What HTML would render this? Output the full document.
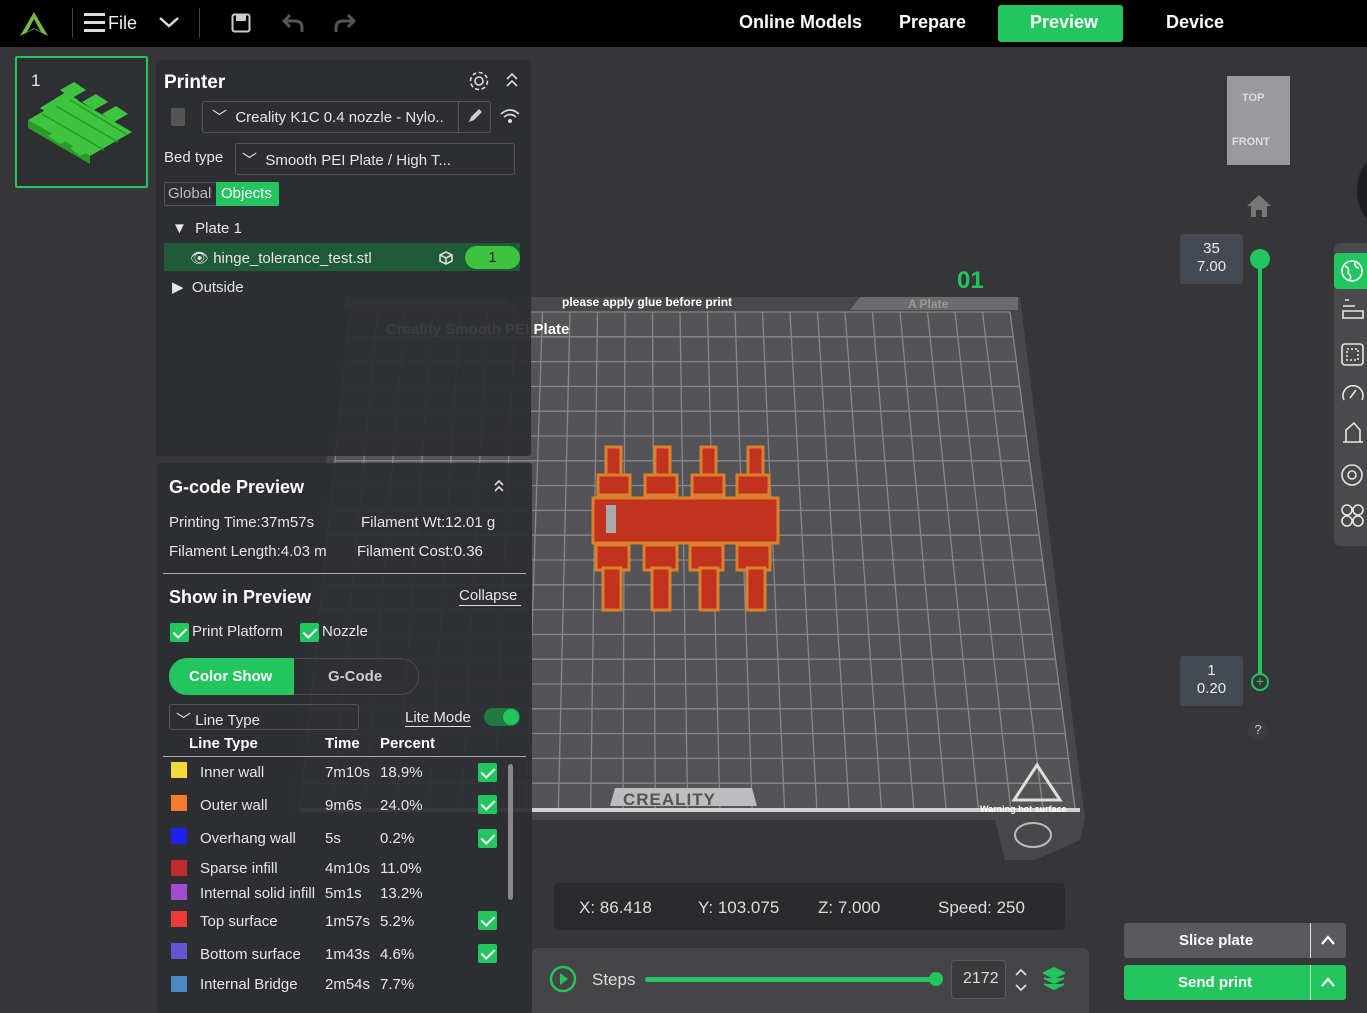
<!DOCTYPE html>
<html><head><meta charset="utf-8">
<style>
*{box-sizing:border-box;margin:0;padding:0}
body{width:1367px;height:1013px;overflow:hidden;background:#363639;font-family:"Liberation Sans",sans-serif;color:#e8e8e8;position:relative;font-size:15px}
.a{position:absolute}
.top{left:0;top:0;width:1367px;height:47px;background:#000}
.nav{top:12px;font-weight:bold;font-size:18px;color:#fff}
.panel{background:rgba(44,45,48,0.93)}
.cb{width:19px;height:19px;background:#22c55e;border-radius:2px;display:block}
.cb:after{content:"";position:absolute;left:6px;top:2px;width:6px;height:11px;border:solid #fff;border-width:0 2.5px 2.5px 0;transform:rotate(45deg)}
.sw{width:16px;height:16px}
.t{font-size:15px;color:#e6e6e6}
.ic{stroke:#ddd;fill:none;stroke-width:1.6}
</style></head><body>
<div class="a top"></div>
<svg class="a" style="left:18px;top:10px" width="32" height="28" viewBox="0 0 32 28"><path d="M16 2 L30 26 L16 19 L2 26 Z" fill="#7ab648"/><path d="M16 9 L23 22 L16 18 L9 22 Z" fill="#000"/></svg>
<div class="a" style="left:72px;top:8px;width:1px;height:30px;background:#444"></div>
<div class="a" style="left:84px;top:13px;width:21px;height:3px;background:#ddd;box-shadow:0 8px 0 #ddd,0 16px 0 #ddd"></div>
<div class="a" style="left:108px;top:13px;font-size:18px;color:#eee">File</div>
<svg class="a" style="left:158px;top:15px" width="22" height="14"><path d="M2 3 L11 11 L20 3" stroke="#ddd" stroke-width="2.5" fill="none"/></svg>
<div class="a" style="left:199px;top:8px;width:1px;height:30px;background:#444"></div>
<svg class="a" style="left:231px;top:13px" width="20" height="20"><rect x="1.5" y="1.5" width="17" height="17" rx="2" fill="none" stroke="#ccc" stroke-width="2"/><rect x="5" y="2" width="10" height="6" fill="#ccc"/></svg>
<svg class="a" style="left:281px;top:12px" width="24" height="22"><path d="M9 3 L3 9 L9 15 M3 9 H14 Q21 9 21 16 V20" stroke="#555" stroke-width="3" fill="none"/></svg>
<svg class="a" style="left:333px;top:12px" width="24" height="22"><path d="M15 3 L21 9 L15 15 M21 9 H10 Q3 9 3 16 V20" stroke="#555" stroke-width="3" fill="none"/></svg>
<div class="a nav" style="left:739px">Online Models</div>
<div class="a nav" style="left:899px">Prepare</div>
<div class="a" style="left:998px;top:5px;width:125px;height:37px;background:#22c55e;border-radius:3px"></div>
<div class="a nav" style="left:1030px">Preview</div>
<div class="a nav" style="left:1166px">Device</div>

<!-- plate -->
<svg class="a" style="left:0;top:0" width="1367" height="1013">
<path d="M345 297 L1020 297 L1085 818 L1080 840 L1035 860 L1005 860 L995 820 L300 820 L285 815 Z" fill="#48484b"/>
<path d="M345 297 L505 297 L520 310 L345 310 Z M860 297 L1018 297 L1018 310 L850 310 Z" fill="#6c6c6f"/>
<path d="M350 312 L1010 312 L1075 808 L300 808 Z" fill="#545457"/>
<g stroke="#88888b" stroke-width="1.3">
<line x1="350" y1="312" x2="300" y2="808"/><line x1="377.5" y1="312" x2="332.3" y2="808"/><line x1="405" y1="312" x2="364.6" y2="808"/><line x1="432.5" y1="312" x2="396.9" y2="808"/><line x1="460" y1="312" x2="429.2" y2="808"/><line x1="487.5" y1="312" x2="461.5" y2="808"/><line x1="515" y1="312" x2="493.8" y2="808"/><line x1="542.5" y1="312" x2="526.1" y2="808"/><line x1="570" y1="312" x2="558.4" y2="808"/><line x1="597.5" y1="312" x2="590.7" y2="808"/><line x1="625" y1="312" x2="623" y2="808"/><line x1="652.5" y1="312" x2="655.3" y2="808"/><line x1="680" y1="312" x2="687.6" y2="808"/><line x1="707.5" y1="312" x2="719.9" y2="808"/><line x1="735" y1="312" x2="752.2" y2="808"/><line x1="762.5" y1="312" x2="784.5" y2="808"/><line x1="790" y1="312" x2="816.8" y2="808"/><line x1="817.5" y1="312" x2="849.1" y2="808"/><line x1="845" y1="312" x2="881.4" y2="808"/><line x1="872.5" y1="312" x2="913.7" y2="808"/><line x1="900" y1="312" x2="946" y2="808"/><line x1="927.5" y1="312" x2="978.3" y2="808"/><line x1="955" y1="312" x2="1010.6" y2="808"/><line x1="982.5" y1="312" x2="1042.9" y2="808"/><line x1="1010" y1="312" x2="1075" y2="808"/>
<line x1="350" y1="312" x2="1010" y2="312"/><line x1="347.5" y1="336.8" x2="1013.3" y2="336.8"/><line x1="345" y1="361.6" x2="1016.5" y2="361.6"/><line x1="342.5" y1="386.4" x2="1019.8" y2="386.4"/><line x1="340" y1="411.2" x2="1023" y2="411.2"/><line x1="337.5" y1="436" x2="1026.3" y2="436"/><line x1="335" y1="460.8" x2="1029.5" y2="460.8"/><line x1="332.5" y1="485.6" x2="1032.8" y2="485.6"/><line x1="330" y1="510.4" x2="1036" y2="510.4"/><line x1="327.5" y1="535.2" x2="1039.3" y2="535.2"/><line x1="325" y1="560" x2="1042.5" y2="560"/><line x1="322.5" y1="584.8" x2="1045.8" y2="584.8"/><line x1="320" y1="609.6" x2="1049" y2="609.6"/><line x1="317.5" y1="634.4" x2="1052.3" y2="634.4"/><line x1="315" y1="659.2" x2="1055.5" y2="659.2"/><line x1="312.5" y1="684" x2="1058.8" y2="684"/><line x1="310" y1="708.8" x2="1062" y2="708.8"/><line x1="307.5" y1="733.6" x2="1065.3" y2="733.6"/><line x1="305" y1="758.4" x2="1068.5" y2="758.4"/><line x1="302.5" y1="783.2" x2="1071.8" y2="783.2"/>
</g>
<rect x="300" y="808" width="780" height="4" fill="#d0d0d0"/>
<path d="M615 788 L752 788 L757 806 L610 806 Z" fill="#bdbdbf"/>
<text x="623" y="805" font-size="17" font-weight="bold" fill="#555" font-family="Liberation Sans" letter-spacing="1">CREALITY</text>
<text x="562" y="306" font-size="12" font-weight="bold" fill="#fff" font-family="Liberation Sans">please apply glue before print</text>
<text x="386" y="334" font-size="15" font-weight="bold" fill="#fff" font-family="Liberation Sans">Creality Smooth PEI Plate</text>
<text x="908" y="308" font-size="12" font-weight="bold" fill="#999" font-family="Liberation Sans">A Plate</text>
<text x="957" y="288" font-size="24" font-weight="bold" fill="#22c55e" font-family="Liberation Sans">01</text>
<path d="M1037 765 L1060 800 L1014 800 Z" fill="none" stroke="#ddd" stroke-width="3"/>
<text x="980" y="812" font-size="9" font-weight="bold" fill="#fff" font-family="Liberation Sans">Warning hot surface</text>
<ellipse cx="1033" cy="835" rx="18" ry="12" fill="none" stroke="#bbb" stroke-width="2"/>
<!-- object -->
<g fill="#c3321e" stroke="#d9822b" stroke-width="3">
<rect x="606" y="447" width="15" height="35"/><rect x="655" y="447" width="15" height="35"/><rect x="701" y="447" width="15" height="35"/><rect x="748" y="447" width="15" height="35"/>
<rect x="598" y="475" width="32" height="20"/><rect x="645" y="475" width="32" height="20"/><rect x="692" y="475" width="32" height="20"/><rect x="737" y="475" width="32" height="20"/>
<rect x="593" y="498" width="185" height="45"/>
<rect x="596" y="545" width="33" height="25"/><rect x="644" y="545" width="33" height="25"/><rect x="690" y="545" width="33" height="25"/><rect x="737" y="545" width="33" height="25"/>
<rect x="603" y="568" width="18" height="42"/><rect x="652" y="568" width="18" height="42"/><rect x="700" y="568" width="18" height="42"/><rect x="747" y="568" width="18" height="42"/>
</g>
<rect x="606" y="505" width="10" height="28" fill="#aaa"/>
</svg>

<!-- plate thumb -->
<div class="a" style="left:15px;top:56px;width:133px;height:132px;border:2px solid #22c55e;border-radius:2px;background:#2e2f32"></div>
<div class="a" style="left:31px;top:71px;font-size:17px">1</div>
<svg class="a" style="left:26px;top:80px" width="112" height="86"><g fill="#3ec43e">
<path d="M2 40 L44 16 L106 52 L64 76 Z"/>
<path d="M2 40 L64 76 L64 84 L2 48 Z" fill="#2a9a2a"/>
<path d="M14 28 L40 12 L52 20 L26 36 Z"/>
<path d="M34 10 L48 2 L60 10 L46 18 Z"/>
<path d="M56 22 L70 14 L82 22 L68 30 Z"/>
<path d="M76 34 L90 26 L102 34 L88 42 Z"/>
<path d="M22 56 L34 50 L46 58 L34 64 Z"/>
<path d="M44 68 L56 62 L66 70 L54 76 Z"/>
</g>
<g stroke="#2a9a2a" stroke-width="1.5"><line x1="16" y1="34" x2="78" y2="70"/><line x1="30" y1="26" x2="92" y2="62"/><line x1="44" y1="20" x2="100" y2="54"/></g></svg>

<!-- printer panel -->
<div class="a panel" style="left:156px;top:60px;width:375px;height:396px;border-radius:3px"></div>
<div class="a" style="left:164px;top:72px;font-size:19px;font-weight:bold;color:#fff">Printer</div>
<svg class="a" style="left:468px;top:70px" width="22" height="22"><circle cx="11" cy="11" r="4" class="ic"/><circle cx="11" cy="11" r="8.5" class="ic" stroke-dasharray="4 2.6"/></svg>
<svg class="a" style="left:504px;top:70px" width="16" height="20"><path d="M3 9 L8 4 L13 9 M3 16 L8 11 L13 16" class="ic" stroke-width="2"/></svg>
<div class="a" style="left:171px;top:108px;width:14px;height:18px;background:#555;border-radius:2px"></div>
<div class="a" style="left:202px;top:101px;width:289px;height:32px;border:1px solid #555;border-radius:3px"></div>
<div class="a" style="left:458px;top:101px;width:1px;height:32px;background:#555"></div>
<div class="a t" style="left:212px;top:106px">﹀&nbsp; Creality K1C 0.4 nozzle - Nylo..</div>
<svg class="a" style="left:466px;top:107px" width="18" height="18"><path d="M3 15 L5 10 L13 2 L16 5 L8 13 Z" fill="#ccc"/></svg>
<svg class="a" style="left:499px;top:107px" width="22" height="18"><path d="M2 7 Q11 -1 20 7 M5 10 Q11 5 17 10" class="ic" stroke-width="2"/><circle cx="11" cy="14" r="2" fill="#ddd"/></svg>
<div class="a t" style="left:164px;top:149px">Bed type</div>
<div class="a" style="left:235px;top:143px;width:280px;height:32px;border:1px solid #555;border-radius:3px"></div>
<div class="a t" style="left:242px;top:149px">﹀&nbsp; Smooth PEI Plate / High T...</div>
<div class="a" style="left:164px;top:182px;width:115px;height:24px;border:1px solid #555;border-radius:2px"></div>
<div class="a" style="left:216px;top:182px;width:63px;height:24px;background:#22c55e;border-radius:0 2px 2px 0"></div>
<div class="a t" style="left:168px;top:185px;color:#bbb">Global</div>
<div class="a t" style="left:221px;top:185px;color:#fff">Objects</div>
<div class="a t" style="left:172px;top:220px">▼&nbsp; Plate 1</div>
<div class="a" style="left:164px;top:243px;width:356px;height:28px;background:#1f5a39"></div>
<div class="a t" style="left:190px;top:249px">👁︎ hinge_tolerance_test.stl</div>
<svg class="a" style="left:437px;top:249px" width="20" height="18"><path d="M3 6 L9 3 L15 6 L15 12 L9 15 L3 12 Z M3 6 L9 9 L15 6 M9 9 V15" class="ic"/></svg>
<div class="a" style="left:465px;top:246px;width:55px;height:23px;background:#3ec43e;border-radius:12px;text-align:center;color:#222;line-height:23px">1</div>
<div class="a t" style="left:172px;top:278px">▶&nbsp; Outside</div>

<!-- gcode panel -->
<div class="a panel" style="left:157px;top:463px;width:375px;height:550px;border-radius:3px"></div>
<div class="a" style="left:169px;top:477px;font-size:18px;font-weight:bold;color:#fff">G-code Preview</div>
<svg class="a" style="left:491px;top:477px" width="16" height="18"><path d="M4 8 L8 4 L12 8 M4 14 L8 10 L12 14" class="ic" stroke-width="2"/></svg>
<div class="a t" style="left:169px;top:514px">Printing Time:37m57s</div>
<div class="a t" style="left:361px;top:514px">Filament Wt:12.01 g</div>
<div class="a t" style="left:169px;top:543px">Filament Length:4.03 m</div>
<div class="a t" style="left:357px;top:543px">Filament Cost:0.36</div>
<div class="a" style="left:163px;top:573px;width:363px;height:1px;background:#aaa"></div>
<div class="a" style="left:169px;top:587px;font-size:18px;font-weight:bold;color:#fff">Show in Preview</div>
<div class="a t" style="left:459px;top:587px;border-bottom:1px solid #ddd;padding:0 4px 1px 0">Collapse</div>
<div class="a cb" style="left:170px;top:623px"></div><div class="a t" style="left:192px;top:623px">Print Platform</div>
<div class="a cb" style="left:300px;top:623px"></div><div class="a t" style="left:322px;top:623px">Nozzle</div>
<div class="a" style="left:169px;top:658px;width:250px;height:37px;border:1px solid #4a4a4c;border-radius:18px"></div>
<div class="a" style="left:169px;top:658px;width:125px;height:37px;background:#22c55e;border-radius:18px 0 0 18px"></div>
<div class="a" style="left:189px;top:668px;font-weight:bold;color:#fff">Color Show</div>
<div class="a" style="left:328px;top:668px;font-weight:bold;color:#ccc">G-Code</div>
<div class="a" style="left:169px;top:704px;width:190px;height:26px;border:1px solid #555;border-radius:3px"></div>
<div class="a t" style="left:176px;top:709px">﹀ Line Type</div>
<div class="a t" style="left:405px;top:709px;border-bottom:1px solid #ddd">Lite Mode</div>
<div class="a" style="left:484px;top:708px;width:36px;height:18px;background:#1e7a3f;border-radius:9px"></div>
<div class="a" style="left:503px;top:709px;width:16px;height:16px;background:#22c55e;border-radius:50%"></div>
<div class="a" style="left:189px;top:735px;font-weight:bold;color:#fff">Line Type</div>
<div class="a" style="left:325px;top:735px;font-weight:bold;color:#fff">Time</div>
<div class="a" style="left:380px;top:735px;font-weight:bold;color:#fff">Percent</div>
<div class="a" style="left:163px;top:756px;width:363px;height:1px;background:#aaa"></div>
<div class="a" style="left:508px;top:764px;width:5px;height:136px;background:#888;border-radius:3px"></div>

<div class="a sw" style="left:171px;top:762px;background:#f5d93a"></div><div class="a t" style="left:200px;top:764px">Inner wall</div><div class="a t" style="left:325px;top:764px">7m10s</div><div class="a t" style="left:380px;top:764px">18.9%</div><div class="a cb" style="left:478px;top:763px"></div>
<div class="a sw" style="left:171px;top:795px;background:#f47c2c"></div><div class="a t" style="left:200px;top:797px">Outer wall</div><div class="a t" style="left:325px;top:797px">9m6s</div><div class="a t" style="left:380px;top:797px">24.0%</div><div class="a cb" style="left:478px;top:795px"></div>
<div class="a sw" style="left:171px;top:828px;background:#1f1ff0"></div><div class="a t" style="left:200px;top:830px">Overhang wall</div><div class="a t" style="left:325px;top:830px">5s</div><div class="a t" style="left:380px;top:830px">0.2%</div><div class="a cb" style="left:478px;top:829px"></div>
<div class="a sw" style="left:171px;top:860px;background:#c02a28"></div><div class="a t" style="left:200px;top:860px">Sparse infill</div><div class="a t" style="left:325px;top:860px">4m10s</div><div class="a t" style="left:380px;top:860px">11.0%</div>
<div class="a sw" style="left:171px;top:884px;background:#a14bd0"></div><div class="a t" style="left:200px;top:885px">Internal solid infill</div><div class="a t" style="left:325px;top:885px">5m1s</div><div class="a t" style="left:380px;top:885px">13.2%</div>
<div class="a sw" style="left:171px;top:911px;background:#f03a3a"></div><div class="a t" style="left:200px;top:913px">Top surface</div><div class="a t" style="left:325px;top:913px">1m57s</div><div class="a t" style="left:380px;top:913px">5.2%</div><div class="a cb" style="left:478px;top:911px"></div>
<div class="a sw" style="left:171px;top:943px;background:#6456d0"></div><div class="a t" style="left:200px;top:946px">Bottom surface</div><div class="a t" style="left:325px;top:946px">1m43s</div><div class="a t" style="left:380px;top:946px">4.6%</div><div class="a cb" style="left:478px;top:944px"></div>
<div class="a sw" style="left:171px;top:976px;background:#4a88c8"></div><div class="a t" style="left:200px;top:976px">Internal Bridge</div><div class="a t" style="left:325px;top:976px">2m54s</div><div class="a t" style="left:380px;top:976px">7.7%</div>

<!-- view cube -->
<div class="a" style="left:1227px;top:76px;width:63px;height:89px;background:#9a9a9e"></div>
<div class="a" style="left:1242px;top:92px;font-size:11px;font-weight:bold;color:#ddd">TOP</div>
<div class="a" style="left:1232px;top:136px;font-size:11px;font-weight:bold;color:#ddd">FRONT</div>
<svg class="a" style="left:1245px;top:193px" width="28" height="26"><path d="M14 2 L26 13 H22 V24 H17 V17 H11 V24 H6 V13 H2 Z" fill="#777"/></svg>
<div class="a" style="left:1357px;top:158px;width:40px;height:65px;background:#1e1e20;border-radius:50%"></div>
<!-- layer slider -->
<div class="a" style="left:1258px;top:258px;width:4px;height:424px;background:#22c55e"></div>
<div class="a" style="left:1250px;top:249px;width:20px;height:20px;background:#22c55e;border-radius:50%"></div>
<div class="a" style="left:1251px;top:673px;width:18px;height:18px;border:2px solid #22c55e;background:#363639;border-radius:50%;color:#22c55e;font-size:14px;line-height:13px;text-align:center">+</div>
<div class="a" style="left:1180px;top:234px;width:63px;height:50px;background:#454a52;border-radius:3px;text-align:center;line-height:18px;padding-top:6px;font-size:15px">35<br>7.00</div>
<div class="a" style="left:1180px;top:656px;width:63px;height:50px;background:#454a52;border-radius:3px;text-align:center;line-height:18px;padding-top:6px;font-size:15px">1<br>0.20</div>
<div class="a" style="left:1248px;top:720px;width:20px;height:20px;border-radius:50%;background:#3c3c3f;text-align:center;font-size:13px;line-height:20px;color:#ccc">?</div>
<!-- right toolbar -->
<div class="a" style="left:1334px;top:243px;width:40px;height:303px;background:#4a4a4d;border-radius:6px 0 0 6px"></div>
<div class="a" style="left:1334px;top:253px;width:40px;height:36px;background:#22c55e;border-radius:4px 0 0 4px"></div>
<svg class="a" style="left:1340px;top:258px" width="27" height="280" fill="none" stroke="#e6e6e6" stroke-width="1.6">
<circle cx="12" cy="13" r="10" stroke="#fff"/><path d="M5 8 Q10 10 8 15 Q12 18 10 22 M15 4 Q14 9 19 10" stroke="#fff"/>
<path d="M5 42 H9 M3 48 H15 M3 53 H23 V60 H3 Z"/>
<rect x="2" y="86" width="21" height="21" rx="3"/><rect x="7" y="91" width="11" height="11" stroke-dasharray="2 2"/>
<path d="M4 142 A10 10 0 1 1 22 142 M10 140 L16 132"/>
<path d="M3 184 H23 M6 184 V172 L14 165 L20 172 V184"/>
<circle cx="12" cy="217" r="10"/><circle cx="12" cy="217" r="4"/>
<circle cx="7" cy="252" r="5"/><circle cx="18" cy="252" r="5"/><circle cx="7" cy="263" r="5"/><circle cx="18" cy="263" r="5"/>
</svg>
<!-- coords -->
<div class="a" style="left:554px;top:883px;width:511px;height:47px;background:#2b2b2e;border-radius:5px"></div>
<div class="a" style="left:579px;top:898px;font-size:17px;color:#ddd">X: 86.418</div>
<div class="a" style="left:698px;top:898px;font-size:17px;color:#ddd">Y: 103.075</div>
<div class="a" style="left:818px;top:898px;font-size:17px;color:#ddd">Z: 7.000</div>
<div class="a" style="left:938px;top:898px;font-size:17px;color:#ddd">Speed: 250</div>
<!-- steps -->
<div class="a" style="left:532px;top:948px;width:557px;height:65px;background:#454548;border-radius:6px 6px 0 0"></div>
<svg class="a" style="left:549px;top:965px" width="28" height="28"><circle cx="14" cy="14" r="12" fill="none" stroke="#22c55e" stroke-width="2.5"/><path d="M11 8 L19 14 L11 20 Z" fill="#22c55e"/></svg>
<div class="a" style="left:592px;top:970px;font-size:17px;color:#ddd">Steps</div>
<div class="a" style="left:645px;top:977px;width:290px;height:5px;background:#22c55e;border-radius:3px"></div>
<div class="a" style="left:929px;top:972px;width:14px;height:14px;background:#22c55e;border-radius:50%"></div>
<div class="a" style="left:951px;top:960px;width:55px;height:39px;border:1px solid #5a5a5d;border-radius:4px;background:#3a3a3d"></div>
<div class="a" style="left:963px;top:970px;font-size:16px;color:#ddd">2172</div>
<svg class="a" style="left:1014px;top:966px" width="14" height="28"><path d="M2 9 L7 4 L12 9 M2 19 L7 24 L12 19" stroke="#ddd" stroke-width="1.8" fill="none"/></svg>
<svg class="a" style="left:1043px;top:967px" width="22" height="24"><path d="M11 1 L21 6 L11 11 L1 6 Z M1 11 L11 16 L21 11 M1 17 L11 22 L21 17" fill="#22c55e" stroke="#22c55e" stroke-width="2"/></svg>
<!-- buttons -->
<div class="a" style="left:1124px;top:923px;width:222px;height:35px;background:#5a5a5e;border-radius:3px"></div>
<div class="a" style="left:1310px;top:923px;width:1px;height:35px;background:#ddd"></div>
<div class="a" style="left:1179px;top:932px;font-weight:bold;color:#fff">Slice plate</div>
<svg class="a" style="left:1320px;top:933px" width="16" height="14"><path d="M2 11 L8 4 L14 11" stroke="#fff" stroke-width="2.2" fill="none"/></svg>
<div class="a" style="left:1124px;top:965px;width:222px;height:35px;background:#22c55e;border-radius:3px"></div>
<div class="a" style="left:1310px;top:965px;width:1px;height:35px;background:#bdf0cf"></div>
<div class="a" style="left:1178px;top:974px;font-weight:bold;color:#fff">Send print</div>
<svg class="a" style="left:1320px;top:975px" width="16" height="14"><path d="M2 11 L8 4 L14 11" stroke="#fff" stroke-width="2.2" fill="none"/></svg>
</body></html>
